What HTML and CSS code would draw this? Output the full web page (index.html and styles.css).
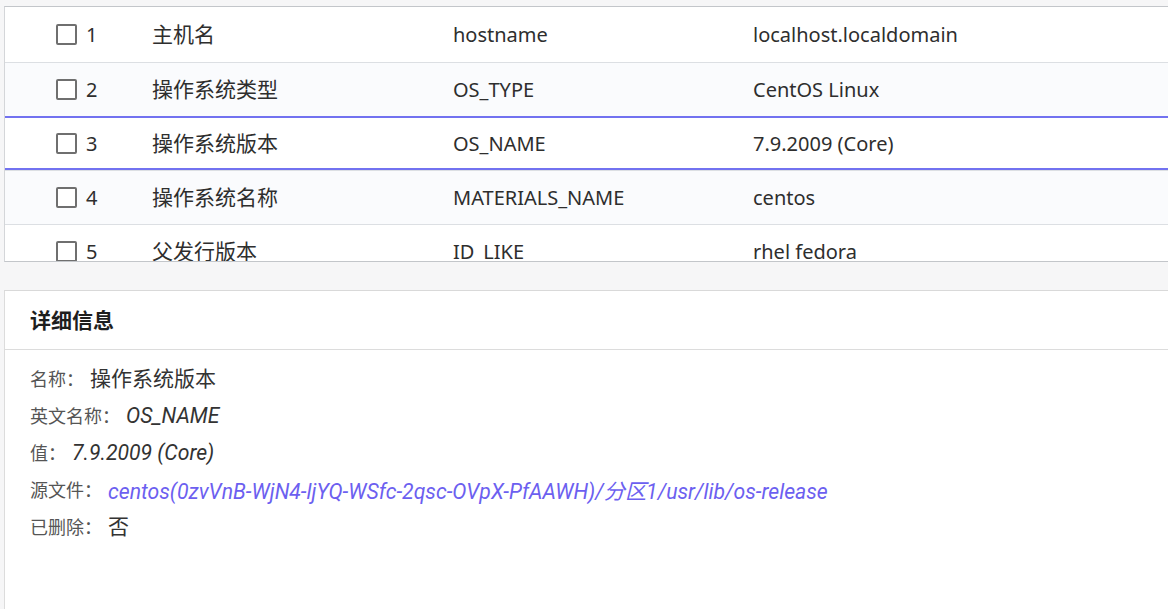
FILE: index.html
```html
<!DOCTYPE html>
<html lang="zh-CN">
<head>
<meta charset="utf-8">
<title>详细信息</title>
<link rel="stylesheet" href="styles.css">
</head>
<body>
<div class="page">
  <section class="table-panel">
    <div class="row first">
      <div class="cell sel"><span class="cb"></span><span class="num">1</span></div>
      <div class="cell zh">主机名</div>
      <div class="cell">hostname</div>
      <div class="cell">localhost.localdomain</div>
    </div>
    <div class="row striped">
      <div class="cell sel"><span class="cb"></span><span class="num">2</span></div>
      <div class="cell zh">操作系统类型</div>
      <div class="cell">OS_TYPE</div>
      <div class="cell">CentOS Linux</div>
    </div>
    <div class="row active">
      <div class="cell sel"><span class="cb"></span><span class="num">3</span></div>
      <div class="cell zh">操作系统版本</div>
      <div class="cell">OS_NAME</div>
      <div class="cell">7.9.2009 (Core)</div>
    </div>
    <div class="row striped">
      <div class="cell sel"><span class="cb"></span><span class="num">4</span></div>
      <div class="cell zh">操作系统名称</div>
      <div class="cell">MATERIALS_NAME</div>
      <div class="cell">centos</div>
    </div>
    <div class="row">
      <div class="cell sel"><span class="cb"></span><span class="num">5</span></div>
      <div class="cell zh">父发行版本</div>
      <div class="cell">ID_LIKE</div>
      <div class="cell">rhel fedora</div>
    </div>
  </section>

  <section class="detail-panel">
    <header class="detail-head">详细信息</header>
    <div class="detail-body">
      <div class="line"><span class="label">名称：</span><span class="val">操作系统版本</span></div>
      <div class="line"><span class="label">英文名称：</span><span class="val it">OS_NAME</span></div>
      <div class="line"><span class="label">值：</span><span class="val it">7.9.2009 (Core)</span></div>
      <div class="line"><span class="label">源文件：</span><a class="val it link" href="#">centos(0zvVnB-WjN4-ljYQ-WSfc-2qsc-OVpX-PfAAWH)/分区1/usr/lib/os-release</a></div>
      <div class="line"><span class="label">已删除：</span><span class="val">否</span></div>
    </div>
  </section>
</div>
</body>
</html>
```

FILE: styles.css
```css
html, body {
  margin: 0;
  padding: 0;
}
body {
  background: #f6f6f7;
  font-family: "Noto Sans", "Noto Sans CJK SC", sans-serif;
  color: #2e2e2e;
  overflow: hidden;
}
.page {
  width: 1168px;
  height: 609px;
  padding-top: 6px;
  padding-left: 4px;
  box-sizing: border-box;
  display: flex;
  flex-direction: column;
}
.table-panel {
  background: #fff;
  border-top: 1px solid #c3c6ca;
  border-bottom: 1px solid #c3c6ca;
  border-left: 1px solid #d4d6d9;
  height: 254px;
  overflow: hidden;
  flex: none;
}
.row {
  display: grid;
  grid-template-columns: 147px 301px 300px 1fr;
  height: 54px;
  box-sizing: border-box;
  border-bottom: 1px solid #dcdfe3;
  font-size: 20px;
  background: #fff;
}
.row.first {
  height: 56px;
}
.row.striped {
  background: #fafbfd;
}
.row.active {
  box-shadow: 0 -1px 0 #7272f0, inset 0 1px 0 #7272f0, inset 0 -2px 0 #7272f0;
}
.cell {
  display: flex;
  align-items: center;
  white-space: nowrap;
}
.cell.zh {
  font-family: "Noto Sans CJK SC", sans-serif;
  font-size: 21px;
  padding-bottom: 4px;
}
.cell.sel {
  padding-left: 51px;
}
.cb {
  width: 17px;
  height: 17px;
  border: 2px solid #6f6f6f;
  border-radius: 2px;
  background: #fff;
  margin-right: 9px;
  flex: none;
}
.num {
  line-height: 1;
}
.detail-panel {
  margin-top: 28px;
  background: #fff;
  border-top: 1px solid #d9d9d9;
  border-left: 1px solid #dcdcdc;
  flex: 1;
}
.detail-head {
  height: 59px;
  box-sizing: border-box;
  border-bottom: 1px solid #dcdcdc;
  padding: 0 0 2px 25px;
  display: flex;
  align-items: center;
  font-size: 21px;
  font-weight: bold;
  color: #1e1e1e;
  font-family: "Noto Sans CJK SC", sans-serif;
}
.detail-body {
  padding: 10px 0 0 25px;
}
.line {
  height: 37px;
  display: flex;
  align-items: center;
  white-space: nowrap;
}
.label {
  font-size: 18px;
  color: #555;
  margin-right: 6px;
  padding-bottom: 2px;
  font-family: "Noto Sans CJK SC", sans-serif;
}
.val {
  font-size: 21px;
  color: #333;
  padding-bottom: 3px;
  font-family: "Noto Sans CJK SC", sans-serif;
}
.val.it {
  font-family: Roboto, "Noto Sans CJK SC", sans-serif;
  font-size: 21.2px;
  font-style: italic;
  padding-bottom: 0;
}
.link {
  color: #6c5ff0;
  text-decoration: none;
}
```
